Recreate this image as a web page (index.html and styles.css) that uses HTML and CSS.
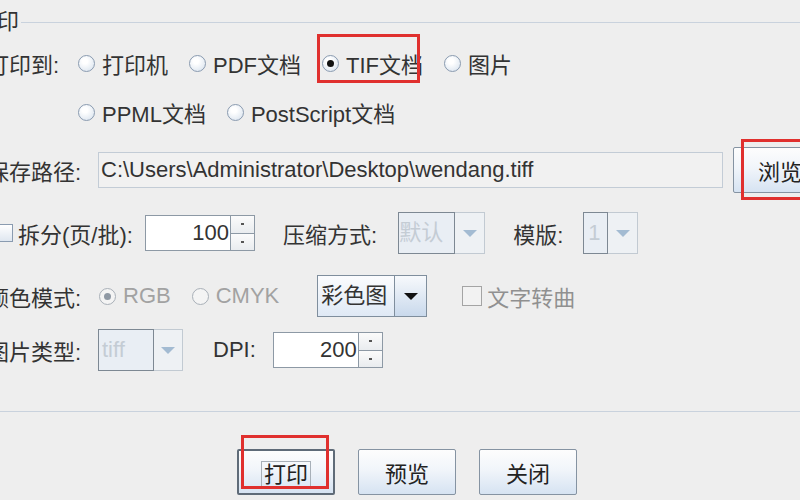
FILE: index.html
```html
<!DOCTYPE html>
<html>
<head>
	<meta charset="utf-8">
	<meta name="viewport" content="width=device-width, initial-scale=1.0">
	<title>打印</title>
	<link rel="stylesheet" href="styles.css">
</head>
<body>
	<div class="dialog">
		<fieldset class="group">
			<legend>打印</legend>
			<div class="form">
				<div class="row row-1">
					<span class="label">打印到:</span>
					<span class="radio"><i class="circle"></i>打印机</span>
					<span class="radio"><i class="circle"></i>PDF文档</span>
					<span class="radio marked"><i class="circle on"></i>TIF文档<b class="mark mark-tif"></b></span>
					<span class="radio"><i class="circle"></i>图片</span>
				</div>
				<div class="row row-2">
					<span class="radio"><i class="circle"></i>PPML文档</span>
					<span class="radio"><i class="circle"></i>PostScript文档</span>
				</div>
				<div class="row row-3">
					<span class="label">保存路径:</span>
					<div class="field path">C:\Users\Administrator\Desktop\wendang.tiff</div>
					<button class="btn browse">浏览<b class="mark mark-browse"></b></button>
				</div>
				<div class="row row-4">
					<span class="split"><i class="check"></i>拆分(页/批):</span>
					<div class="spinner">
						<span class="spin-value">100</span>
						<span class="spin-btns"><b></b><b></b></span>
					</div>
					<span class="text compress">压缩方式:</span>
					<div class="combo disabled w-default">
						<span class="combo-text">默认</span>
						<span class="combo-arrow"></span>
					</div>
					<span class="text plate">模版:</span>
					<div class="combo disabled w-one">
						<span class="combo-text">1</span>
						<span class="combo-arrow"></span>
					</div>
				</div>
				<div class="row row-5">
					<span class="label">颜色模式:</span>
					<span class="radio dim first"><i class="circle on"></i>RGB</span>
					<span class="radio dim"><i class="circle"></i>CMYK</span>
					<div class="combo w-color">
						<span class="combo-text">彩色图</span>
						<span class="combo-arrow"></span>
					</div>
					<span class="check-item dim"><i class="check"></i>文字转曲</span>
				</div>
				<div class="row row-6">
					<span class="label">图片类型:</span>
					<div class="combo disabled w-type">
						<span class="combo-text">tiff</span>
						<span class="combo-arrow"></span>
					</div>
					<span class="text dpi">DPI:</span>
					<div class="spinner">
						<span class="spin-value">200</span>
						<span class="spin-btns"><b></b><b></b></span>
					</div>
				</div>
			</div>
		</fieldset>
		<div class="actions">
			<button class="btn action default"><span class="focus">打印</span><b class="mark mark-print"></b></button>
			<button class="btn action">预览</button>
			<button class="btn action">关闭</button>
		</div>
	</div>
</body>
</html>
```

FILE: styles.css
```css
* {
	box-sizing: border-box;
}
html, body {
	margin: 0;
	height: 100%;
	overflow: hidden;
}
body {
	background: #eeeeee;
	font-family: "Liberation Sans", "Noto Sans CJK SC", sans-serif;
	font-size: 22px;
	color: #333;
}
.dialog {
	margin-left: -30px;
	width: 900px;
}
.group {
	margin: 9px 0 0;
	padding: 0 0 40px 2px;
	border: 1px solid #c9d2dd;
}
.group legend {
	padding: 0 2px;
	line-height: 26px;
}
.form {
	padding: 4px 0 0 14px;
}
.row {
	display: flex;
	align-items: center;
}
.row-1 { height: 48px; }
.row-2 { height: 50px; padding-left: 91px; }
.row-3 { height: 66px; }
.row-4 { height: 60px; }
.row-5 { height: 66px; }
.row-6 { height: 42px; }
.label {
	width: 91px;
	flex-shrink: 0;
	white-space: nowrap;
}

/* radio buttons */
.radio {
	display: flex;
	align-items: center;
	margin-right: 21px;
	white-space: nowrap;
	position: relative;
}
.circle {
	width: 17px;
	height: 17px;
	margin-right: 7px;
	border-radius: 50%;
	border: 1px solid #8a9bb0;
	background: radial-gradient(circle at 40% 35%, #ffffff 20%, #d9e3ee 90%);
	display: flex;
	align-items: center;
	justify-content: center;
}
.circle.on::after {
	content: '';
	width: 7px;
	height: 7px;
	border-radius: 50%;
	background: #111;
}
.dim {
	color: #a2a2a2;
}
.dim .circle {
	border-color: #a9b0b8;
	background: #f4f4f4;
}
.dim .circle.on::after {
	background: #8f99a4;
}
.radio.first {
	margin-left: 21px;
}

/* text field */
.field {
	height: 36px;
	line-height: 34px;
	border: 1px solid #c3ccd6;
	background: #f1f1f1;
	padding-left: 2px;
	white-space: nowrap;
	overflow: hidden;
}
.path {
	width: 625px;
	margin-left: 20px;
}

/* buttons */
.btn {
	font: inherit;
	color: #222;
	border: 1px solid #8593a2;
	border-radius: 2px;
	background: linear-gradient(#fdfdfd, #f1f5fa 45%, #d6e3f2);
	padding: 0;
	position: relative;
}
.browse {
	width: 94px;
	height: 46px;
	margin-left: 10px;
}
.actions {
	display: flex;
	gap: 23px;
	padding-left: 267px;
	margin-top: 37px;
}
.action {
	width: 98px;
	height: 46px;
}
.action.default {
	border: 2px solid #5f6b78;
}
.focus {
	border: 1px solid #a8b0b8;
	padding: 0 2px;
}

/* checkboxes */
.split, .check-item {
	display: flex;
	align-items: center;
	white-space: nowrap;
}
.split {
	width: 158px;
	flex-shrink: 0;
}
.check {
	width: 18px;
	height: 18px;
	margin-right: 5px;
	border: 1px solid #8a9bb0;
	background: linear-gradient(#ffffff, #dfe7f0);
}
.split .check {
	margin-left: 8px;
}
.check-item {
	margin-left: 35px;
	color: #909090;
}
.check-item .check {
	width: 20px;
	height: 20px;
	border-color: #a4a4a4;
	background: #f2f2f2;
}

/* spinners */
.spinner {
	display: flex;
	width: 110px;
	height: 36px;
	border: 1px solid #8d99a5;
	background: #fff;
}
.spin-value {
	flex: 1;
	text-align: right;
	line-height: 34px;
	padding-right: 1px;
}
.spin-btns {
	width: 24px;
	display: flex;
	flex-direction: column;
	border-left: 1px solid #8d99a5;
}
.spin-btns b {
	flex: 1;
	display: flex;
	align-items: center;
	justify-content: center;
	background: linear-gradient(#fbfbfb, #e9ecef);
}
.spin-btns b + b {
	border-top: 1px solid #8d99a5;
}
.spin-btns b::after {
	content: '';
	width: 3px;
	height: 2px;
	background: #555;
}

/* combo boxes */
.combo {
	display: flex;
	height: 42px;
	flex-shrink: 0;
}
.combo-text {
	flex: 1;
	line-height: 40px;
	padding-left: 3px;
	border: 1px solid #7f8e9d;
	background: linear-gradient(#fbfcfe, #dfe9f5);
	white-space: nowrap;
	overflow: hidden;
}
.combo-arrow {
	width: 32px;
	display: flex;
	align-items: center;
	justify-content: center;
	border: 1px solid #7f8e9d;
	border-left: none;
	background: linear-gradient(#f7f9fc, #c9d9ec);
}
.combo-arrow::after {
	content: '';
	border-left: 7px solid transparent;
	border-right: 7px solid transparent;
	border-top: 7px solid #111;
}
.combo.disabled .combo-text {
	color: #c4ccd4;
	background: #e9eef4;
	border-color: #7d8893;
}
.combo.disabled .combo-arrow {
	background: #eef1f4;
	border-color: #c2cad2;
}
.combo.disabled .combo-arrow::after {
	border-top-color: #a3bbd2;
}
.w-default {
	width: 87px;
	margin-left: 21px;
}
.w-default .combo-text {
	padding-left: 0;
}
.w-one {
	width: 55px;
	margin-left: 20px;
}
.w-one .combo-text {
	padding-left: 4px;
}
.w-one .combo-arrow, .w-default .combo-arrow {
	width: 30px;
}
.w-color {
	width: 110px;
	margin-left: 17px;
}
.w-type {
	width: 85px;
	margin-left: 20px;
}
.w-type .combo-arrow {
	width: 29px;
}

.text {
	white-space: nowrap;
}
.compress {
	margin-left: 28px;
}
.plate {
	margin-left: 28px;
}
.dpi {
	margin-left: 30px;
	margin-right: 17px;
}

/* red annotation boxes */
.mark {
	position: absolute;
	border: 3px solid #e0302e;
	pointer-events: none;
}
.mark-tif {
	left: -5px;
	top: -13px;
	width: 103px;
	height: 49px;
}
.mark-browse {
	left: 7px;
	top: -9px;
	width: 110px;
	height: 61px;
}
.mark-print {
	left: 2px;
	top: -16px;
	width: 88px;
	height: 54px;
}
```
